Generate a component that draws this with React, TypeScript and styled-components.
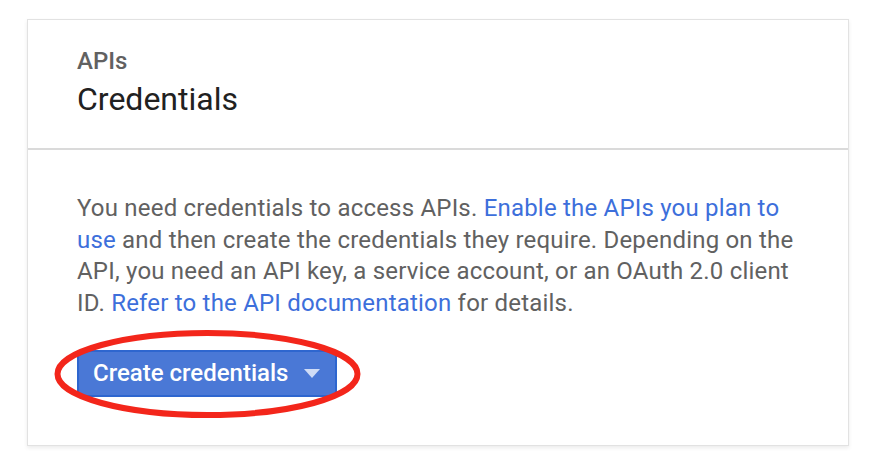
import React from "react";
import styled, { createGlobalStyle } from "styled-components";

const Global = createGlobalStyle`
  html, body { margin: 0; padding: 0; background: #ffffff; }
  body { font-family: Roboto, "Noto Sans", Arial, sans-serif; }
`;

const Page = styled.div`
  width: 882px;
  height: 472px;
  padding: 19px 0 0 27px;
  box-sizing: border-box;
`;

const Card = styled.section`
  width: 822px;
  height: 427px;
  box-sizing: border-box;
  background: #fff;
  border: 1px solid #e2e2e2;
  box-shadow: 0 2px 4px rgba(0, 0, 0, 0.08);
  display: flex;
  flex-direction: column;
`;

const Header = styled.header`
  height: 130px;
  box-sizing: border-box;
  padding: 26px 49px 0;
  border-bottom: 2px solid #dadada;
`;

const Eyebrow = styled.div`
  font-size: 24px;
  font-weight: 500;
  color: #616161;
  line-height: 30px;
`;

const Title = styled.h1`
  margin: 3px 0 0;
  font-size: 32px;
  font-weight: 400;
  color: #212121;
  line-height: 40px;
`;

const Body = styled.div`
  padding: 43px 49px 0;
`;

const Text = styled.p`
  margin: 0;
  font-size: 24px;
  letter-spacing: 0.2px;
  line-height: 31.7px;
  color: #616161;
`;

const Link = styled.a`
  color: #3d6fdb;
  text-decoration: none;
`;

const ButtonWrap = styled.div`
  position: relative;
  width: fit-content;
  margin-top: 30px;
`;

const Button = styled.button`
  height: 47px;
  box-sizing: border-box;
  padding: 0 15px 0 14px;
  display: flex;
  align-items: center;
  gap: 16px;
  background: #4a78d6;
  border: 2px solid #2e66cf;
  border-radius: 2px;
  color: #fff;
  font-family: Roboto, "Noto Sans", Arial, sans-serif;
  font-size: 24px;
  letter-spacing: 0;
  font-weight: 500;
  cursor: pointer;
`;

const Caret = styled.span`
  width: 0;
  height: 0;
  border-left: 8.5px solid transparent;
  border-right: 8.5px solid transparent;
  border-top: 9px solid #cfdcf6;
`;

const Highlight = styled.svg`
  position: absolute;
  left: -23px;
  top: -20px;
  pointer-events: none;
`;

export default function App() {
  return (
    <>
      <Global />
      <Page>
        <Card>
          <Header>
            <Eyebrow>APIs</Eyebrow>
            <Title>Credentials</Title>
          </Header>
          <Body>
            <Text>
              You need credentials to access APIs.{" "}
              <Link href="#">Enable the APIs you plan to use</Link> and then create the
              credentials they require. Depending on the API, you need an API key, a
              service account, or an OAuth 2.0 client ID.{" "}
              <Link href="#">Refer to the API documentation</Link> for details.
            </Text>
            <ButtonWrap>
              <Button>
                Create credentials
                <Caret />
              </Button>
              <Highlight width="307" height="88" viewBox="0 0 307 88">
                <ellipse cx="153.5" cy="44" rx="150" ry="41" fill="none" stroke="#f3261b" strokeWidth="6" />
              </Highlight>
            </ButtonWrap>
          </Body>
        </Card>
      </Page>
    </>
  );
}
